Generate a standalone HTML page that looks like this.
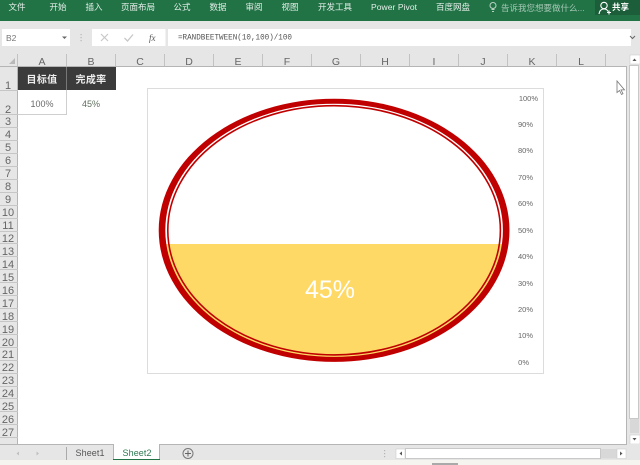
<!DOCTYPE html>
<html><head><meta charset="utf-8">
<style>
html,body{margin:0;padding:0;width:640px;height:465px;overflow:hidden;background:#fff}
svg{display:block}
text{font-family:"Liberation Sans","Noto Sans CJK SC",sans-serif}
.rb{font-size:8.5px;fill:#e4efe9;text-anchor:middle}
.ch{font-size:10.5px;fill:#666;text-anchor:middle}
.rh{font-size:11px;fill:#666;text-anchor:middle}
.ax{font-size:7.5px;fill:#666;text-anchor:end}
</style></head><body>
<svg width="640" height="465" viewBox="0 0 640 465" xmlns="http://www.w3.org/2000/svg">
<defs><clipPath id="c"><rect x="150" y="244" width="380" height="125"/></clipPath></defs>
<rect width="640" height="465" fill="#fff"/>
<!-- ribbon -->
<rect width="640" height="21" fill="#217346"/>
<rect x="595" y="0" width="45" height="15" fill="#1b5e39"/>
<text class="rb" x="17" y="10">文件</text>
<text class="rb" x="58" y="10">开始</text>
<text class="rb" x="94" y="10">插入</text>
<text class="rb" x="138" y="10">页面布局</text>
<text class="rb" x="182" y="10">公式</text>
<text class="rb" x="218" y="10">数据</text>
<text class="rb" x="254" y="10">审阅</text>
<text class="rb" x="290" y="10">视图</text>
<text class="rb" x="335" y="10">开发工具</text>
<text class="rb" x="394" y="10" textLength="46">Power Pivot</text>
<text class="rb" x="453" y="10">百度网盘</text>
<text x="501" y="11" style="font-size:8.5px;fill:#a6c7b5">告诉我您想要做什么...</text>
<g fill="none" stroke="#b9d3c5" stroke-width="1"><circle cx="493" cy="5.5" r="3"/><path d="M491.5 9.5h3M492 11.5h2"/></g>
<g fill="none" stroke="#fff" stroke-width="1.1"><circle cx="604" cy="5.5" r="3.2"/><path d="M599 14c.5-3.5 2.5-5 5-5s3.5 1 4 2.500M607 12.500h4M609 10.500v4"/></g>
<text x="612" y="10" style="font-size:8.5px;fill:#fff;font-weight:bold">共享</text>
<!-- formula area -->
<rect y="21" width="640" height="33" fill="#e6e6e6"/>
<rect x="2" y="29" width="68" height="17" fill="#fff"/>
<text x="6" y="41" style="font-size:8.5px;fill:#777">B2</text>
<path d="M62 36.500h5l-2.500 2.500z" fill="#666"/>
<g fill="#b5b5b5"><rect x="80.500" y="34" width="1.200" height="1.200"/><rect x="80.500" y="37" width="1.200" height="1.200"/><rect x="80.500" y="40" width="1.200" height="1.200"/></g>
<rect x="92" y="29" width="73.500" height="17" fill="#fff"/>
<path d="M101 34l7 7M108 34l-7 7" stroke="#c8c8c8" stroke-width="1.200" fill="none"/>
<path d="M124.500 38l3 3 5.500-6.500" stroke="#c8c8c8" stroke-width="1.300" fill="none"/>
<text x="149" y="41" style="font-size:9px;fill:#555;font-style:italic;font-family:'Liberation Serif',serif">fx</text>
<rect x="168" y="29" width="463" height="17" fill="#fff"/>
<text x="178" y="39.500" textLength="114" lengthAdjust="spacingAndGlyphs" style="font-family:'Liberation Mono',monospace;font-size:8px;fill:#555">=RANDBEETWEEN(10,100)/100</text>
<path d="M630 36l2.500 2.500 2.500-2.500" stroke="#666" fill="none" stroke-width="1"/>
<!-- column header -->
<rect y="54" width="640" height="12.500" fill="#e6e6e6"/>
<rect x="0" y="54" width="18" height="390" fill="#e6e6e6"/>
<rect x="0" y="66" width="626" height="1" fill="#b5b5b5"/>
<path d="M15 58v6h-6z" fill="#b9b9b9"/>
<g stroke="#c2c2c2" stroke-width="1"><path d="M17.500 54v12M66.500 54v12M115.500 54v12M164.500 54v12M213.500 54v12M262.500 54v12M311.500 54v12M360.500 54v12M409.500 54v12M458.500 54v12M507.500 54v12M556.500 54v12M605.500 54v12"/></g>
<text class="ch" x="42" y="65">A</text><text class="ch" x="91" y="65">B</text><text class="ch" x="140" y="65">C</text><text class="ch" x="189" y="65">D</text><text class="ch" x="238" y="65">E</text><text class="ch" x="287" y="65">F</text><text class="ch" x="336" y="65">G</text><text class="ch" x="385" y="65">H</text><text class="ch" x="434" y="65">I</text><text class="ch" x="483" y="65">J</text><text class="ch" x="532" y="65">K</text><text class="ch" x="581" y="65">L</text>
<!-- row header -->
<rect x="17" y="66" width="1" height="378" fill="#b5b5b5"/>
<g stroke="#c6c6c6" stroke-width="1"><path d="M0 90.500h18M0 114.500h18M0 127.500h18M0 140.500h18M0 153.500h18M0 166.500h18M0 179.500h18M0 192.500h18M0 205.500h18M0 218.500h18M0 231.500h18M0 243.500h18M0 256.500h18M0 269.500h18M0 282.500h18M0 295.500h18M0 308.500h18M0 321.500h18M0 334.500h18M0 347.500h18M0 360.500h18M0 373.500h18M0 386.500h18M0 398.500h18M0 411.500h18M0 424.500h18M0 437.500h18"/></g>
<text class="rh" x="8" y="89">1</text><text class="rh" x="8" y="113">2</text><text class="rh" x="8" y="125">3</text><text class="rh" x="8" y="138">4</text><text class="rh" x="8" y="151">5</text><text class="rh" x="8" y="164">6</text><text class="rh" x="8" y="177">7</text><text class="rh" x="8" y="190">8</text><text class="rh" x="8" y="203">9</text><text class="rh" x="8" y="216">10</text><text class="rh" x="8" y="229">11</text><text class="rh" x="8" y="242">12</text><text class="rh" x="8" y="255">13</text><text class="rh" x="8" y="268">14</text><text class="rh" x="8" y="281">15</text><text class="rh" x="8" y="294">16</text><text class="rh" x="8" y="307">17</text><text class="rh" x="8" y="320">18</text><text class="rh" x="8" y="333">19</text><text class="rh" x="8" y="346">20</text><text class="rh" x="8" y="358">21</text><text class="rh" x="8" y="371">22</text><text class="rh" x="8" y="384">23</text><text class="rh" x="8" y="397">24</text><text class="rh" x="8" y="410">25</text><text class="rh" x="8" y="423">26</text><text class="rh" x="8" y="436">27</text>
<!-- cells -->
<rect x="18" y="67" width="98" height="23" fill="#3b3b3b"/>
<rect x="66" y="67" width="1" height="23" fill="#777"/>
<text x="42" y="83" text-anchor="middle" style="font-size:10px;fill:#eee;font-weight:bold;letter-spacing:.3px">目标值</text>
<text x="91" y="83" text-anchor="middle" style="font-size:10px;fill:#eee;font-weight:bold;letter-spacing:.3px">完成率</text>
<text x="42" y="107" text-anchor="middle" style="font-size:9px;fill:#6a6a6a">100%</text>
<text x="91" y="107" text-anchor="middle" style="font-size:9px;fill:#5f6f5f">45%</text>
<path d="M66.500 90v24.500M18 114.500h49" stroke="#cfcfcf" fill="none"/>
<!-- chart -->
<rect x="147.500" y="88.500" width="396" height="285" fill="#fff" stroke="#dcdcdc"/>
<g clip-path="url(#c)"><ellipse cx="334.100" cy="230.300" rx="169.500" ry="127.500" fill="#ffd966"/></g>
<path fill-rule="evenodd" fill="#c00000" d="M158.700 230.300a175.400 131.600 0 1 0 350.800 0a175.400 131.600 0 1 0 -350.800 0zM165.300 230.300a168.800 126.600 0 1 0 337.600 0a168.800 126.600 0 1 0 -337.600 0z"/>
<ellipse cx="334.100" cy="230.300" rx="166.300" ry="124.600" fill="none" stroke="#c00000" stroke-width="1.600"/>
<text x="330" y="298" text-anchor="middle" style="font-size:25px;fill:#fff">45%</text>
<text class="ax" x="538" y="101">100%</text><text class="ax" x="533" y="127">90%</text><text class="ax" x="533" y="153">80%</text><text class="ax" x="533" y="180">70%</text><text class="ax" x="533" y="206">60%</text><text class="ax" x="533" y="233">50%</text><text class="ax" x="533" y="259">40%</text><text class="ax" x="533" y="286">30%</text><text class="ax" x="533" y="312">20%</text><text class="ax" x="533" y="338">10%</text><text class="ax" x="529" y="365">0%</text>
<!-- cursor -->
<path d="M617 81v11.500l2.500-2 2 4 1.500-.8-2-3.800h3.500z" fill="#fff" stroke="#777" stroke-width=".8"/>
<!-- vertical scrollbar -->
<rect x="626" y="54" width="14" height="390" fill="#e6e6e6"/>
<rect x="626" y="66" width="1" height="379" fill="#b5b5b5"/>
<rect x="630" y="55" width="10" height="9" fill="#fff" stroke="#c8c8c8" stroke-width=".5"/>
<path d="M632.500 61l2-2.500 2 2.500z" fill="#555"/>
<rect x="629.500" y="65.500" width="9" height="353" fill="#fff" stroke="#c8c8c8"/>
<rect x="630" y="419" width="9" height="14" fill="#d8d8d8"/>
<rect x="630" y="435" width="10" height="9" fill="#fff" stroke="#c8c8c8" stroke-width=".5"/>
<path d="M632.500 438l2 2.500 2-2.500z" fill="#555"/>
<!-- bottom bar -->
<rect x="0" y="444" width="640" height="16" fill="#e6e6e6"/>
<rect x="0" y="444" width="627" height="1" fill="#b5b5b5"/>
<path d="M19 451.500l-2.500 2 2.500 2zM36.500 451.500l2.500 2-2.500 2z" fill="#c0c0c0"/>
<path d="M66.500 447v13" stroke="#aaa"/>
<text x="90" y="456" text-anchor="middle" style="font-size:9px;fill:#555" textLength="29">Sheet1</text>
<rect x="113.500" y="444" width="46" height="16" fill="#fff"/>
<path d="M113.500 444v16M159.500 444v16" stroke="#b5b5b5"/>
<rect x="113" y="459" width="47" height="1.500" fill="#217346"/>
<text x="137" y="456" text-anchor="middle" style="font-size:9px;fill:#2f7a52" textLength="29">Sheet2</text>
<circle cx="188" cy="453.500" r="5" fill="none" stroke="#777"/>
<path d="M185 453.500h6M188 450.500v6" stroke="#666"/>
<g fill="#b5b5b5"><rect x="384" y="450" width="1.200" height="1.200"/><rect x="384" y="453" width="1.200" height="1.200"/><rect x="384" y="456" width="1.200" height="1.200"/></g>
<rect x="396" y="449" width="9" height="9.500" fill="#fff" stroke="#c8c8c8" stroke-width=".5"/>
<path d="M402 451.500l-2.500 2 2.500 2z" fill="#555"/>
<rect x="405.500" y="448.500" width="195" height="10" fill="#fff" stroke="#c8c8c8"/>
<rect x="601" y="449" width="16" height="9.500" fill="#d8d8d8"/>
<rect x="617" y="449" width="9" height="9.500" fill="#fff" stroke="#c8c8c8" stroke-width=".5"/>
<path d="M620 451.500l2.500 2-2.500 2z" fill="#555"/>
<rect x="0" y="460" width="640" height="5" fill="#f5f4ef"/>
<rect x="432" y="463" width="26" height="2" fill="#aaa"/>
</svg>
</body></html>
